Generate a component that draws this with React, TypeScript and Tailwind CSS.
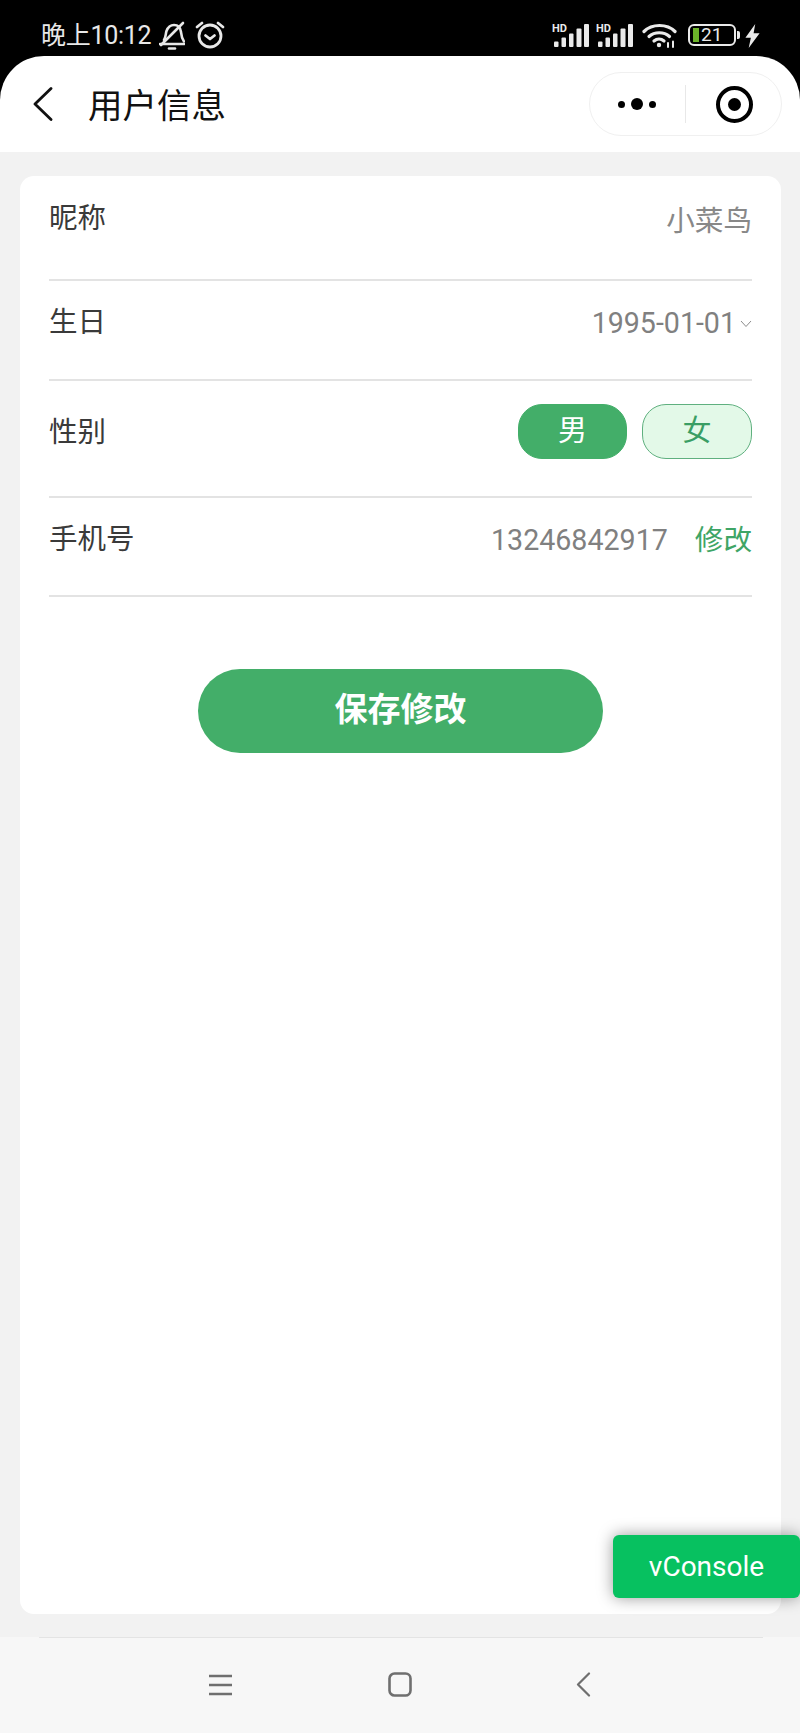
const font = "font-['Roboto','Noto_Sans_CJK_SC',sans-serif]";

const SignalIcon = () => (
  <svg width="37" height="27" viewBox="0 -4 37 27" className="block">
    <text x="0" y="8" fontFamily="Roboto, sans-serif" fontWeight="700" fontSize="11" fill="#eaeaea">
      HD
    </text>
    <rect x="2" y="17.500" width="4.500" height="5.500" rx="1" fill="#eaeaea" />
    <rect x="9.500" y="13.500" width="4.500" height="9.500" rx="1" fill="#eaeaea" />
    <rect x="17" y="9.500" width="4.500" height="13.500" rx="1" fill="#eaeaea" />
    <rect x="24.500" y="4.500" width="5" height="18.500" rx="1" fill="#eaeaea" />
    <rect x="32" y="0" width="5" height="23" rx="1" fill="#eaeaea" />
  </svg>
);

const StatusBar = () => (
  <div className="flex h-14 items-start pl-[41px] pr-[39px] pt-[21px] text-[#e8e8e8]">
    <span className="w-[118px] text-[25px] leading-[30px] tracking-[-0.3px]">晚上10:12</span>
    <svg width="26" height="29" viewBox="0 0 26 29" fill="none" stroke="#e8e8e8" strokeWidth="2.600" strokeLinecap="round" strokeLinejoin="round" className="block">
      <path d="M5 19c2-3 1.500-6 2.500-9C9 6 12 4 15 4c4 0 6.500 3 7 7 .3 3 .5 6 3 9.500" />
      <path d="M1 23h24" />
      <path d="M2 24 24 2" />
      <path d="M10 27.500h6" />
    </svg>
    <svg width="30" height="28" viewBox="0 0 30 28" fill="none" stroke="#e8e8e8" strokeWidth="2.800" strokeLinecap="round" strokeLinejoin="round" className="ml-[10px] block">
      <circle cx="15" cy="15" r="11" />
      <path d="M10.500 14.500l4.500 3.500 4.500-3.500" />
      <path d="M2 6l5-4M28 6l-5-4" />
    </svg>
    <div className="flex-1" />
    <div className="mt-[3px] flex items-start">
      <div className="-mt-[4px]">
        <SignalIcon />
      </div>
      <div className="-mt-[4px] ml-[7px]">
        <SignalIcon />
      </div>
      <svg width="36" height="25" viewBox="0 0 36 25" fill="none" stroke="#eaeaea" strokeWidth="3.200" strokeLinecap="round" className="ml-[9px] -mt-[1px] block">
        <path d="M2 8.500C10 .5 25 .5 33 8.500" />
        <path d="M7 13.500c5.500-5 15-5 20.500 0" />
        <path d="M12 18c3-2.500 7-2.500 10 0" />
        <circle cx="17" cy="22" r="2.200" fill="#eaeaea" stroke="none" />
        <path d="M26 20v4M31 18.500v5.500" strokeWidth="2" />
      </svg>
      <div className="ml-[10px] flex items-center">
        <div className="flex h-[22px] w-[48px] items-center rounded-[6px] border-[2.500px] border-[#eaeaea] pl-[3px]">
          <div className="h-[14px] w-[6px] bg-[#6cb32a]" />
          <span className="ml-[2px] text-[19px] leading-[18px] text-[#e8e8e8]">21</span>
        </div>
        <div className="ml-[1px] h-[8px] w-[3px] rounded-r-[2px] bg-[#eaeaea]" />
      </div>
      <svg width="17" height="24" viewBox="0 0 15 22" className="ml-[4px] block">
        <path d="M10 0 1 12.500h5L4 22l10-13.500H8.500z" fill="#eaeaea" />
      </svg>
    </div>
  </div>
);

const NavBar = () => (
  <div className="flex h-24 items-center rounded-t-[44px] bg-white pl-[33px] pr-[18px]">
    <svg width="20" height="34" viewBox="0 0 20 34" fill="none" stroke="#111" strokeWidth="2.800" strokeLinecap="round" strokeLinejoin="round" className="block">
      <path d="M18 1.500 2 17l16 15.500" />
    </svg>
    <span className="ml-[35px] mt-[3px] text-[34.500px] leading-[42px] text-[#111]">用户信息</span>
    <div className="flex-1" />
    <div className="flex h-[64px] w-[193px] items-center rounded-full border border-[#f0f0f0]">
      <div className="flex w-[95px] items-center justify-end gap-[6px] pr-[29px]">
        <div className="h-[7px] w-[7px] rounded-full bg-black" />
        <div className="h-[12px] w-[12px] rounded-full bg-black" />
        <div className="h-[7px] w-[7px] rounded-full bg-black" />
      </div>
      <div className="h-[38px] w-px bg-[#e8e8e8]" />
      <div className="flex flex-1 justify-center pl-[2px]">
        <div className="flex h-[37px] w-[37px] items-center justify-center rounded-full border-[4px] border-black">
          <div className="h-[13px] w-[13px] rounded-full bg-black" />
        </div>
      </div>
    </div>
  </div>
);

const Row = ({ label, className, labelClass, children }: { label: string; className: string; labelClass?: string; children: React.ReactNode }) => (
  <div className={"flex items-start justify-between border-b-2 border-[#e3e3e3] " + className}>
    <span className={"text-[28.500px] leading-[40px] text-[#3a3a3a] " + (labelClass ?? "")}>{label}</span>
    {children}
  </div>
);

const Card = () => (
  <div className="h-[1438px] rounded-[14px] bg-white px-[29px] pt-[22px]">
    <Row label="昵称" className="h-[83px]" labelClass="mt-[1px]">
      <span className="mt-[3px] text-[28.600px] leading-[40px] text-[#888888]">小菜鸟</span>
    </Row>
    <Row label="生日" className="h-[100px] pt-[22px]">
      <div className="flex items-center">
        <span className="text-[28.600px] leading-[40px] text-[#808080]">1995-01-01</span>
        <svg width="12" height="8" viewBox="0 0 12 8" fill="none" stroke="#8c8c8c" strokeWidth="1" className="ml-[4px] mt-[1px] block">
          <path d="M1 1l5 5.500L11 1" />
        </svg>
      </div>
    </Row>
    <Row label="性别" className="h-[117px] pt-[23px]" labelClass="mt-[9px]">
      <div className="flex gap-[15px]">
        <div className="flex h-[55px] w-[109px] items-center justify-center rounded-[24px] border border-[#43ae69] bg-[#43ae69] text-[29px] text-white">男</div>
        <div className="flex h-[55px] w-[110px] items-center justify-center rounded-[24px] border-[1.500px] border-[#5fb07f] bg-[#e3f9e8] text-[29px] text-[#3a9e64]">女</div>
      </div>
    </Row>
    <Row label="手机号" className="h-[99px] pt-[22px]">
      <div className="flex items-center">
        <span className="text-[28.600px] leading-[40px] text-[#808080]">13246842917</span>
        <span className="ml-[27px] text-[28.600px] leading-[40px] text-[#3fa566]">修改</span>
      </div>
    </Row>
    <div className="mt-[72px] flex justify-center">
      <button className={"h-[84px] w-[405px] rounded-full bg-[#43ae69] pb-[3px] text-[33px] font-bold text-white " + font}>
        保存修改
      </button>
    </div>
  </div>
);

const BottomBar = () => (
  <div className="h-24 bg-[#f7f7f7]">
    <div className="ml-[39px] mr-[37px] h-px bg-[#e4e4e4]" />
    <div className="flex h-[95px] items-center pb-[2px] pl-[209px]">
      <svg width="23" height="22" viewBox="0 0 23 22" fill="none" stroke="#6f6f6f" strokeWidth="2.400" className="block">
        <path d="M0 2h23M0 11h23M0 20h23" />
      </svg>
      <svg width="24" height="25" viewBox="0 0 24 25" fill="none" stroke="#6f6f6f" strokeWidth="2.600" className="ml-[156px] block">
        <rect x="1.500" y="1.500" width="21" height="22" rx="5" />
      </svg>
      <svg width="15" height="25" viewBox="0 0 15 25" fill="none" stroke="#6f6f6f" strokeWidth="2.200" strokeLinecap="round" strokeLinejoin="round" className="ml-[164px] block">
        <path d="M13 1.500 2 12.500l11 11" />
      </svg>
    </div>
  </div>
);

const App = () => {
  return (
    <div className={"relative flex h-[1733px] w-[800px] flex-col overflow-hidden bg-black " + font}>
      <StatusBar />
      <NavBar />
      <div className="flex-1 bg-[#f2f2f2] pl-[20px] pr-[19px] pt-[24px]">
        <Card />
      </div>
      <BottomBar />
      <div className="absolute right-0 top-[1535px] flex h-[63px] w-[187px] items-center justify-center rounded-[6px] bg-[#07c160] text-[28px] text-white shadow-[0_0_16px_rgba(0,0,0,0.4)]">
        vConsole
      </div>
    </div>
  );
};

export default App;
